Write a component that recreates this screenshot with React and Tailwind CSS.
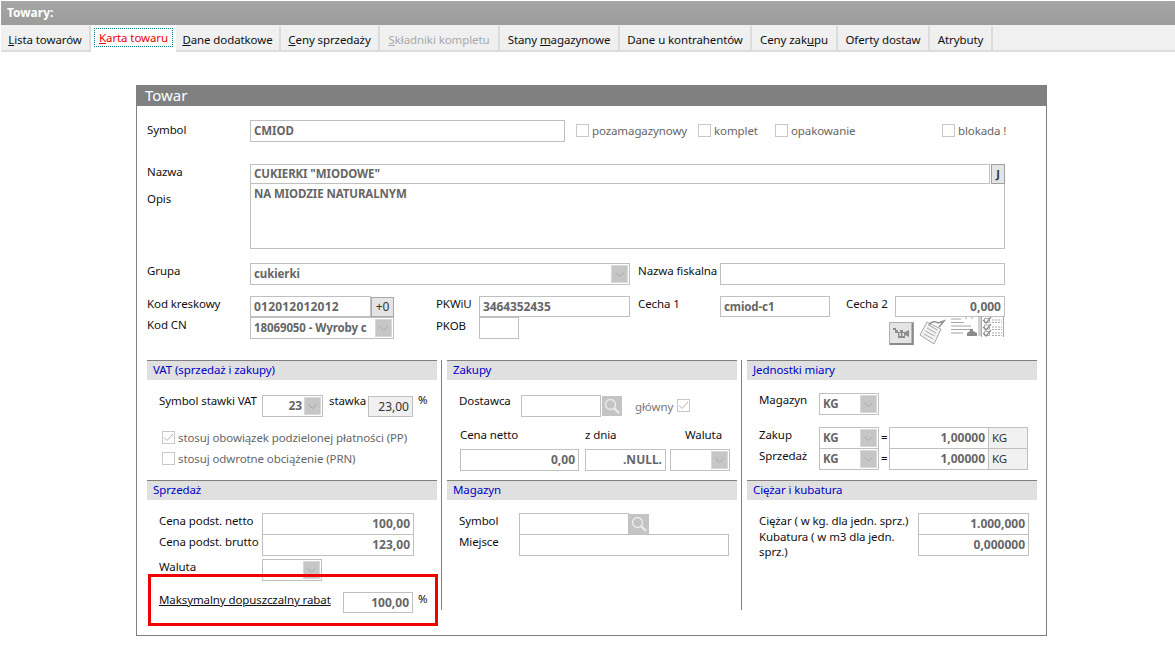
import clsx from 'clsx';

const tabs = [
    { w: 90, label: <><u>L</u>ista towarów</> },
    { w: 85, label: <><u>K</u>arta towaru</>, active: true },
    { w: 105, label: <><u>D</u>ane dodatkowe</> },
    { w: 99, label: <><u>C</u>eny sprzedaży</> },
    { w: 120, label: <><u>S</u>kładniki kompletu</>, disabled: true },
    { w: 120, label: <>Stany <u>m</u>agazynowe</> },
    { w: 132, label: <>Dane u kontrahentów</> },
    { w: 86, label: <>Ceny zak<u>u</u>pu</> },
    { w: 92, label: <>Oferty dostaw</> },
    { w: 63, label: <>Atrybuty</> },
];

const Label = ({ w, className, children }) => (
    <div style={{ width: w }} className={clsx('shrink-0 text-[11.5px] leading-[16px] text-[#111] whitespace-nowrap', className)}>{children}</div>
);

const Field = ({ w, h = 22, value, right, fill, className }) => (
    <div
        style={{ width: w, height: h }}
        className={clsx(
            'shrink-0 border border-[#c0c0c0] px-[3px] font-bold text-[#666] whitespace-nowrap overflow-hidden flex items-center',
            right ? 'justify-end text-[12px] tracking-normal' : 'text-[11.5px]',
            fill && 'bg-[#f0f0f0]',
            className
        )}
    >
        {value}
    </div>
);

const Arrow = () => (
    <span className="w-[17px] h-[18px] shrink-0 bg-[#c6c6c6] border border-[#d8d8d8] flex items-center justify-center">
        <svg width="9" height="5" viewBox="0 0 9 5" fill="none" stroke="#a8a8a8"><path d="M0.5 0.5L4.5 4.5L8.5 0.5" /></svg>
    </span>
);

const Select = ({ w, h = 22, value, right, className }) => (
    <div
        style={{ width: w, height: h }}
        className={clsx('shrink-0 border border-[#c0c0c0] pl-[3px] pr-px text-[11.5px] font-bold text-[#666] flex items-center', className)}
    >
        <span className={clsx('flex-1 min-w-0 overflow-hidden whitespace-nowrap', right && 'text-right pr-[2px] text-[12px]')}>{value}</span>
        <Arrow />
    </div>
);

const Check = ({ checked }) => (
    <span className="w-[13px] h-[13px] shrink-0 border border-[#c8c8c8] flex items-center justify-center">
        {checked && <svg width="11" height="9" viewBox="0 0 11 9" fill="none" stroke="#b0b0b0"><path d="M1 4.5L4 7.5L10 1" /></svg>}
    </span>
);

const CheckLabel = ({ w, checked, children, className }) => (
    <div style={{ width: w }} className={clsx('flex shrink-0 items-center gap-[3px] text-[#666] whitespace-nowrap', className)}>
        <Check checked={checked} />
        <span>{children}</span>
    </div>
);

const SearchBtn = () => (
    <span className="w-[20px] h-[20px] shrink-0 bg-[#c4c4c4] flex items-center justify-center">
        <svg width="18" height="18" viewBox="0 0 18 18" fill="none" stroke="#ececec" strokeWidth="1.3">
            <circle cx="7.5" cy="7.5" r="5" />
            <path d="M11 11L16 16" strokeWidth="2.2" />
        </svg>
    </span>
);

const Section = ({ title, h, children }) => (
    <div style={{ height: h }}>
        <div className="h-[20px] bg-[#e0e0e0] border-t border-[#808080] pl-[6px] text-[11.5px] leading-[17px] text-[#0000c8]">{title}</div>
        {children}
    </div>
);

const Toolbar = () => (
    <div className="flex items-start w-[116px] shrink-0">
        <svg width="25" height="23" viewBox="0 0 25 23" className="mt-[6px]">
            <rect x="0.5" y="0.5" width="24" height="22" fill="#e4e4e4" stroke="#b0b0b0" />
            <path d="M23.5 1V22H1" fill="none" stroke="#8a8a8a" strokeWidth="2" />
            <path d="M4 6h3v2h2v2h2V8h3v2h2l4-2v7l-4-2v3H9v-5H6V8H4z" fill="#8c8c8c" />
            <path d="M10.500 11h1.500v3h-1.500zM13.500 11h1.500v3h-1.500z" fill="#e4e4e4" />
        </svg>
        <svg width="27" height="26" viewBox="0 0 27 26" className="ml-[5px] mt-[3px]" fill="none" stroke="#a8a8a8">
            <path d="M8 3L1 16l14 9 7-15z" fill="#f2f2f2" />
            <path d="M8 9l9 5M6.500 12l9 5M5 15l9 5M9.500 6l9 5" />
            <path d="M10 6C12 2 17 2 19 4l6-2-5 6" stroke="#8f8f8f" strokeWidth="1.500" />
        </svg>
        <svg width="31" height="21" viewBox="0 0 31 21" className="ml-[5px]" fill="none" stroke="#a4a4a4">
            <path d="M0 3h10M0 6.500h13M0 10h20M0 13.500h20M0 17h12M14 2h2M20 2h2M28 0v20M30 0v20" />
            <path d="M16 20v-3l3-2v-2h3v2l4 2v3z" fill="#8a8a8a" stroke="none" />
        </svg>
        <svg width="23" height="22" viewBox="0 0 23 22" className="ml-[-1px]" fill="none" stroke="#a8a8a8">
            <path d="M0.500 0v21M22.500 0v21" />
            <path d="M3.500 2.500h5v4h-5zM3.500 9h5v4h-5zM3.500 15.500h5v4h-5z" />
            <path d="M11 4h10M11 6.500h10M11 11h10M11 13.500h10M11 17h10M11 19.500h10" strokeDasharray="2 1" />
            <path d="M2 4l3 3 5-6M2 11l3 3 5-6M2 17l3 3 5-6" stroke="#8f8f8f" strokeWidth="1.200" />
        </svg>
    </div>
);

export default function App() {
    return (
        <div className="relative h-[663px] w-full overflow-hidden bg-white font-['Noto_Sans',sans-serif] text-[11.5px] tracking-[-0.1px]">
            {/* Title bar */}
            <div className="pt-px pl-px">
                <div className="h-[24px] bg-gradient-to-b from-[#a6a6a6] to-[#9c9c9c] pl-[6px] text-[12px] font-bold leading-[24px] tracking-normal text-white">Towary:</div>
            </div>

            {/* Tabs */}
            <div className="ml-px flex h-[27px] bg-[#f0f0f0] border-b-2 border-[#dcdcdc]">
                {tabs.map((tab, i) => (
                    <div
                        key={i}
                        style={{ width: tab.w }}
                        className={clsx(
                            'shrink-0 whitespace-nowrap text-center',
                            tab.active
                                ? 'h-[27px] bg-white px-[3px] pt-[3px] text-[#f00000]'
                                : 'mt-px h-[24px] border-r-2 border-[#dcdcdc] leading-[28px]',
                            tab.disabled ? 'text-[#a8a8a8]' : !tab.active && 'text-[#111]'
                        )}
                    >
                        {tab.active
                            ? <div className="h-[19px] border border-dotted border-[#007c80] leading-[17px]">{tab.label}</div>
                            : tab.label}
                    </div>
                ))}
            </div>

            {/* Form panel */}
            <div className="ml-[136px] mt-[33px] h-[551px] w-[911px] border border-t-0 border-[#808080]">
                <div className="-mx-px h-[21px] bg-[#808080] pl-[9px] text-[15px] leading-[21px] tracking-normal text-white">Towar</div>

                <div className="pl-[10px]">
                    <div className="mt-[14px] flex h-[22px] items-start">
                        <Label w={103} className="mt-[2px]">Symbol</Label>
                        <Field w={315} value="CMIOD" />
                        <div className="ml-[11px] mt-[2px] flex items-center">
                            <CheckLabel w={122}>pozamagazynowy</CheckLabel>
                            <CheckLabel w={77}>komplet</CheckLabel>
                            <CheckLabel w={167}>opakowanie</CheckLabel>
                            <CheckLabel w={70}>blokada !</CheckLabel>
                        </div>
                    </div>

                    <div className="mt-[22px] flex h-[20px] items-start">
                        <Label w={103}>Nazwa</Label>
                        <Field w={740} h={20} value={'CUKIERKI "MIODOWE"'} />
                        <div className="ml-px flex h-[20px] w-[14px] items-center justify-center bg-[#e4e4e4] border border-[#a0a0a0] text-[11px] font-bold text-[#333]">J</div>
                    </div>
                    <div className="flex h-[65px] items-start">
                        <Label w={103} className="mt-[7px]">Opis</Label>
                        <div className="h-[65px] w-[755px] border border-t-0 border-[#c0c0c0] px-[3px] font-bold leading-[20px] text-[#666]">NA MIODZIE NATURALNYM</div>
                    </div>

                    <div className="mt-[14px] flex h-[22px] items-start">
                        <Label w={103}>Grupa</Label>
                        <Select w={380} value="cukierki" />
                        <Label w={82} className="ml-[8px]">Nazwa fiskalna</Label>
                        <Field w={285} />
                    </div>

                    <div className="mt-[11px] flex h-[21px] items-start">
                        <Label w={103}>Kod kreskowy</Label>
                        <Field w={121} h={21} value="012012012012" className="!text-[12px] tracking-[0.2px]" />
                        <div className="mt-px flex h-[20px] w-[23px] items-center justify-center border border-[#a8a8a8] bg-[#e4e4e4] text-[12px] text-[#333]">+0</div>
                        <Label w={43} className="ml-[42px]">PKWiU</Label>
                        <Field w={151} h={21} value="3464352435" className="!text-[12px]" />
                        <Label w={82} className="ml-[8px]">Cecha 1</Label>
                        <Field w={110} h={21} value="cmiod-c1" />
                        <Label w={49} className="ml-[16px]">Cecha 2</Label>
                        <Field w={110} h={21} value="0,000" right />
                    </div>
                    <div className="flex h-[22px] items-start">
                        <Label w={103}>Kod CN</Label>
                        <Select w={144} value="18069050 - Wyroby c" />
                        <Label w={43} className="ml-[42px] mt-px">PKOB</Label>
                        <Field w={40} value="" />
                        <div className="ml-[370px] -mt-px"><Toolbar /></div>
                    </div>

                    {/* Sections */}
                    <div className="mt-[21px] flex h-[250px] items-stretch">
                        <div className="w-[295px] border-r border-[#808080] pr-[4px]">
                            <Section title="VAT (sprzedaż i zakupy)" h={120}>
                                <div className="mt-[15px] flex items-start pl-[12px]">
                                    <Label w={103} className="-mt-[2px]">Symbol stawki VAT</Label>
                                    <Select w={61} value="23" right />
                                    <Label w={39} className="ml-[6px] -mt-[2px]">stawka</Label>
                                    <Field w={45} h={21} value={<span className="font-normal text-[#333]">23,00</span>} right fill className="mt-px" />
                                    <Label w={12} className="ml-[5px] -mt-[3px]">%</Label>
                                </div>
                                <CheckLabel checked className="mt-[12px] ml-[15px]">stosuj obowiązek podzielonej płatności (PP)</CheckLabel>
                                <CheckLabel className="mt-[4px] ml-[15px]">stosuj odwrotne obciążenie (PRN)</CheckLabel>
                            </Section>
                            <Section title="Sprzedaż" h={130}>
                                <div className="mt-[13px] flex items-start pl-[12px]">
                                    <Label w={103}>Cena podst. netto</Label>
                                    <Field w={152} value="100,00" right />
                                </div>
                                <div className="-mt-px flex items-start pl-[12px]">
                                    <Label w={103}>Cena podst. brutto</Label>
                                    <Field w={152} value="123,00" right />
                                </div>
                                <div className="mt-[3px] flex items-start pl-[12px]">
                                    <Label w={103}>Waluta</Label>
                                    <Select w={60} value="" />
                                </div>
                                <div className="mt-[11px] flex items-start pl-[12px]">
                                    <Label w={184} className="underline">Maksymalny dopuszczalny rabat</Label>
                                    <Field w={70} h={21} value="100,00" right />
                                    <Label w={12} className="ml-[5px] -mt-px">%</Label>
                                </div>
                            </Section>
                        </div>

                        <div className="w-[300px] border-r border-[#808080] pl-[5px] pr-[4px]">
                            <Section title="Zakupy" h={120}>
                                <div className="mt-[15px] flex items-start pl-[12px]">
                                    <Label w={62} className="-mt-[2px]">Dostawca</Label>
                                    <Field w={80} value="" />
                                    <div className="ml-px mt-px"><SearchBtn /></div>
                                    <span className="ml-[13px] mt-[3px] w-[42px] text-[#777]">główny</span>
                                    <span className="mt-[4px]"><Check checked /></span>
                                </div>
                                <div className="mt-[10px] flex h-[19px] pl-[13px]">
                                    <Label w={125}>Cena netto</Label>
                                    <Label w={100}>z dnia</Label>
                                    <Label w={40}>Waluta</Label>
                                </div>
                                <div className="mt-[3px] flex gap-[6px] pl-[13px]">
                                    <Field w={119} value="0,00" right />
                                    <Field w={81} value=".NULL." right />
                                    <Select w={60} value="" className="-ml-[2px]" />
                                </div>
                            </Section>
                            <Section title="Magazyn" h={130}>
                                <div className="mt-[13px] flex items-start pl-[12px]">
                                    <Label w={60}>Symbol</Label>
                                    <Field w={110} value="" />
                                    <div className="mt-px"><SearchBtn /></div>
                                </div>
                                <div className="-mt-px flex items-start pl-[12px]">
                                    <Label w={60}>Miejsce</Label>
                                    <Field w={210} value="" />
                                </div>
                            </Section>
                        </div>

                        <div className="w-[295px] pl-[5px]">
                            <Section title="Jednostki miary" h={120}>
                                <div className="mt-[13px] flex items-start pl-[12px]">
                                    <Label w={60} className="-mt-px">Magazyn</Label>
                                    <Select w={60} value="KG" />
                                </div>
                                <div className="mt-[12px] flex items-start pl-[12px]">
                                    <Label w={60}>Zakup</Label>
                                    <Select w={60} value="KG" />
                                    <span className="ml-[2px] w-[8px] leading-[20px] text-[#111]">=</span>
                                    <Field w={100} value="1,00000" right />
                                    <Field w={40} value={<span className="font-normal text-[#333]">KG</span>} fill className="-ml-px" />
                                </div>
                                <div className="-mt-px flex items-start pl-[12px]">
                                    <Label w={60}>Sprzedaż</Label>
                                    <Select w={60} value="KG" />
                                    <span className="ml-[2px] w-[8px] leading-[20px] text-[#111]">=</span>
                                    <Field w={100} value="1,00000" right />
                                    <Field w={40} value={<span className="font-normal text-[#333]">KG</span>} fill className="-ml-px" />
                                </div>
                            </Section>
                            <Section title="Ciężar i kubatura" h={130}>
                                <div className="mt-[13px] flex items-start pl-[12px]">
                                    <div className="w-[159px] shrink-0 leading-[15.500px] text-[#111]">
                                        <div className="whitespace-nowrap">Ciężar ( w kg. dla jedn. sprz.)</div>
                                        <div className="w-[150px]">Kubatura  ( w m3 dla jedn. sprz.)</div>
                                    </div>
                                    <div className="flex flex-col">
                                        <Field w={111} value="1.000,000" right />
                                        <Field w={111} value="0,000000" right className="-mt-px" />
                                    </div>
                                </div>
                            </Section>
                        </div>
                    </div>
                </div>
            </div>

            {/* Red annotation box */}
            <div className="absolute left-[148px] top-[574px] h-[52px] w-[290px] border-[3px] border-[#f00000]" />
        </div>
    );
}
